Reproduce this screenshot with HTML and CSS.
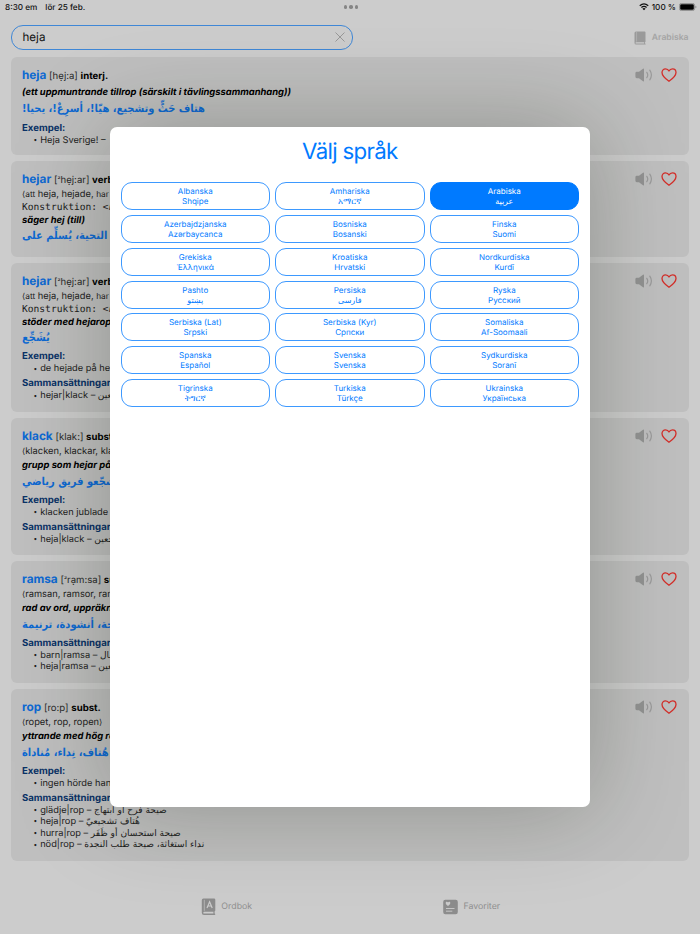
FILE: index.html
```html
<!DOCTYPE html>
<html lang="sv">

<head>
    <meta charset="UTF-8" />
    <meta name="viewport" content="width=device-width,initial-scale=1.0" />
    <title>Lexin</title>
    <link rel="stylesheet" href="styles.css">
</head>

<body>
    <!-- Shared icons -->
    <svg class="sprite" width="0" height="0">
        <symbol id="icon-speaker" viewBox="0 0 18 14">
            <path d="M1.800 3.800h2.200L8 .8q1-.6 1 .5v11.400q0 1.100-1 .5L4 10.200H1.800Q.4 10.200.4 8.800V5.200q0-1.400 1.400-1.400z" fill="#929292" />
            <path d="M11.800 4.300q1.900 2.700 0 5.400M14.800 2.200q3.200 4.800 0 9.600" fill="none" stroke="#9a9a9a" stroke-width="1.200" stroke-linecap="round" />
        </symbol>
        <symbol id="icon-heart" viewBox="0 0 16 14">
            <path d="M8 13.300C5.500 11.600 1 8.300 1 4.600 1 2.300 2.600.8 4.500.8 6.200.8 7.400 1.700 8 3 8.600 1.700 9.800.8 11.500.8 13.400.8 15 2.300 15 4.600c0 3.700-4.500 7-7 8.700z" fill="none" stroke="#d32f2a" stroke-width="1.300" stroke-linejoin="round" />
        </symbol>
    </svg>

    <div class="status-bar">
        <div class="status-left"><span>8:30 em</span><span>lör 25 feb.</span></div>
        <div class="dots"><i></i><i></i><i></i></div>
        <div class="status-right">
            <svg class="wifi" viewBox="0 0 20 15">
                <path d="M1.500 5.500q8.500-7.500 17 0M4.800 9q5.200-4.500 10.400 0" fill="none" stroke="#111" stroke-width="2.600" />
                <path d="M10 14.500 6.800 11.300q3.200-2.600 6.400 0z" fill="#111" />
            </svg>
            <span>100 %</span>
            <svg class="battery" viewBox="0 0 18 8">
                <rect x=".4" y=".4" width="15.200" height="7.200" rx="2.200" fill="none" stroke="#7d7d7d" stroke-width=".8" />
                <rect x="1.200" y="1.200" width="13.600" height="5.600" rx="1.300" fill="#000" />
                <path d="M16.500 2.800v2.400q.9-.4.9-1.200t-.9-1.200z" fill="#7d7d7d" />
            </svg>
        </div>
    </div>

    <div class="top">
        <div class="search">
            <span>heja</span>
            <svg class="clear" viewBox="0 0 10 10">
                <path d="M.5.5l9 9M9.500.5l-9 9" stroke="#929292" stroke-width=".9" />
            </svg>
        </div>
        <div class="language">
            <svg class="book" viewBox="0 0 12 14">
                <path d="M2 .5h8.500q1 0 1 1v9q0 .7-.6.9v1.200h.3q.5 0 .5.500t-.5.500H2.200Q.5 13.600.5 11.900V2Q.5.5 2 .5z" fill="#9a9a9a" />
                <path d="M2.600.5v10.200" stroke="#bcbcbc" stroke-width=".6" />
                <path d="M2.200 11.300h7.900v1.300H2.200q-.7 0-.7-.65t.7-.65z" fill="#ccc" />
            </svg>
            <span>Arabiska</span>
        </div>
    </div>

    <div class="results">
        <div class="card card-1">
            <div class="head"><b class="word">heja</b> [hẹj:a] <b>interj.</b></div>
            <div class="definition">(ett uppmuntrande tillrop (särskilt i tävlingssammanhang))</div>
            <div class="translation"><span dir="rtl" lang="ar">هتاف حَثٍّ وتشجيع، هيّا!، أسرِعْ!، يحيا!</span></div>
            <div class="section-title">Exempel:</div>
            <ul>
                <li>Heja Sverige! –</li>
            </ul>
            <div class="actions"><svg class="speaker"><use href="#icon-speaker" /></svg><svg class="heart"><use href="#icon-heart" /></svg></div>
        </div>

        <div class="card card-2">
            <div class="head"><b class="word">hejar</b> [<span class="accent">²</span>hẹj:ar] <b>verb</b></div>
            <div class="forms"><small>⟨att</small> heja, hejade, <small>har</small></div>
            <div class="construction">Konstruktion: &lt;<em>n</em></div>
            <div class="definition">säger hej (till)</div>
            <div class="translation"><span dir="rtl" lang="ar">يلقي، التحية، يُسلِّم على</span></div>
            <div class="actions"><svg class="speaker"><use href="#icon-speaker" /></svg><svg class="heart"><use href="#icon-heart" /></svg></div>
        </div>

        <div class="card card-3">
            <div class="head"><b class="word">hejar</b> [<span class="accent">²</span>hẹj:ar] <b>verb</b></div>
            <div class="forms"><small>⟨att</small> heja, hejade, <small>har</small></div>
            <div class="construction">Konstruktion: &lt;<em>n</em></div>
            <div class="definition">stöder med hejarop</div>
            <div class="translation"><span dir="rtl" lang="ar">يُشَجِّع</span></div>
            <div class="section-title">Exempel:</div>
            <ul>
                <li>de hejade på hem</li>
            </ul>
            <div class="section-title">Sammansättningar:</div>
            <ul>
                <li>hejar|klack – <span dir="rtl" class="ar">مشجعين</span></li>
            </ul>
            <div class="actions"><svg class="speaker"><use href="#icon-speaker" /></svg><svg class="heart"><use href="#icon-heart" /></svg></div>
        </div>

        <div class="card card-4">
            <div class="head"><b class="word">klack</b> [klak:] <b>subst.</b></div>
            <div class="forms"><small>⟨</small>klacken, klackar, klackarna<small>⟩</small></div>
            <div class="definition">grupp som hejar på</div>
            <div class="translation"><span dir="rtl" lang="ar">مشجّعو فريق رياضي</span></div>
            <div class="section-title">Exempel:</div>
            <ul>
                <li>klacken jublade</li>
            </ul>
            <div class="section-title">Sammansättningar:</div>
            <ul>
                <li>heja|klack – <span dir="rtl" class="ar">مشجعين</span></li>
            </ul>
            <div class="actions"><svg class="speaker"><use href="#icon-speaker" /></svg><svg class="heart"><use href="#icon-heart" /></svg></div>
        </div>

        <div class="card card-5">
            <div class="head"><b class="word">ramsa</b> [<span class="accent">²</span>rạm:sa] <b>subst.</b></div>
            <div class="forms"><small>⟨</small>ramsan, ramsor, ramsorna<small>⟩</small></div>
            <div class="definition">rad av ord, uppräkning</div>
            <div class="translation"><span dir="rtl" lang="ar">أهزوجة، أنشودة، ترنيمة</span></div>
            <div class="section-title">Sammansättningar:</div>
            <ul>
                <li>barn|ramsa – <span dir="rtl" class="ar">أطفال</span></li>
                <li>heja|ramsa – <span dir="rtl" class="ar">مشجعين</span></li>
            </ul>
            <div class="actions"><svg class="speaker"><use href="#icon-speaker" /></svg><svg class="heart"><use href="#icon-heart" /></svg></div>
        </div>

        <div class="card card-6">
            <div class="head"><b class="word">rop</b> [ro:p] <b>subst.</b></div>
            <div class="forms"><small>⟨</small>ropet, rop, ropen<small>⟩</small></div>
            <div class="definition">yttrande med hög röst</div>
            <div class="translation"><span dir="rtl" lang="ar">هُتاف، نِداء، مُناداة</span></div>
            <div class="section-title">Exempel:</div>
            <ul>
                <li>ingen hörde hans</li>
            </ul>
            <div class="section-title">Sammansättningar:</div>
            <ul>
                <li>glädje|rop – <span dir="rtl" class="ar">صيحة فرح او ابتهاج</span></li>
                <li>heja|rop – <span dir="rtl" class="ar">هُتاف تشجيعيّ</span></li>
                <li>hurra|rop – <span dir="rtl" class="ar">صيحة استحسان أو ظَفَر</span></li>
                <li>nöd|rop – <span dir="rtl" class="ar">نداء استغاثة، صيحة طلب النجدة</span></li>
            </ul>
            <div class="actions"><svg class="speaker"><use href="#icon-speaker" /></svg><svg class="heart"><use href="#icon-heart" /></svg></div>
        </div>
    </div>

    <div class="tabs">
        <div class="tab">
            <svg class="tab-icon" viewBox="0 0 15 18">
                <path d="M2.500.5H13q1.300 0 1.300 1.300v10.400q0 .8-.7 1.200v2.200q.7 0 .7.700t-.7.700H3Q.8 17 .8 14.800V2.200Q.8.5 2.500.5z" fill="#8c8c8c" />
                <path d="M3.300 1.800v11" stroke="#c4c4c4" stroke-width=".7" />
                <path d="M3.200 13.800h9.200v1.800H3.200q-.9 0-.9-.9t.9-.9z" fill="#ccc" />
                <path d="M6 10 8.600 3.800 11.200 10M6.900 8h3.400" fill="none" stroke="#ccc" stroke-width="1.200" />
            </svg>
            <span>Ordbok</span>
        </div>
        <div class="tab">
            <svg class="tab-icon" viewBox="0 0 15 18">
                <rect x=".2" y="1.700" width="14.600" height="14.600" rx="2.200" fill="#8c8c8c" />
                <path d="M5 8C3.500 7 2.700 6.200 2.700 5.100 2.700 3.500 4.500 3.400 5 4.600 5.500 3.400 7.300 3.500 7.300 5.100 7.300 6.200 6.500 7 5 8z" fill="#ccc" />
                <path d="M3 10.500h8.500M3 13.200h6.300" stroke="#ccc" stroke-width=".9" />
            </svg>
            <span>Favoriter</span>
        </div>
    </div>

    <div class="modal">
        <h1>Välj språk</h1>
        <div class="languages">
            <button class="lang-btn">Albanska<br>Shqipe</button>
            <button class="lang-btn">Amhariska<br><span class="ethiopic">አማርኛ</span></button>
            <button class="lang-btn selected">Arabiska<br>عربية</button>
            <button class="lang-btn">Azerbajdzjanska<br>Azərbaycanca</button>
            <button class="lang-btn">Bosniska<br>Bosanski</button>
            <button class="lang-btn">Finska<br>Suomi</button>
            <button class="lang-btn">Grekiska<br>Ἑλληνικά</button>
            <button class="lang-btn">Kroatiska<br>Hrvatski</button>
            <button class="lang-btn">Nordkurdiska<br>Kurdî</button>
            <button class="lang-btn">Pashto<br>پښتو</button>
            <button class="lang-btn">Persiska<br>فارسی</button>
            <button class="lang-btn">Ryska<br>Русский</button>
            <button class="lang-btn">Serbiska (Lat)<br>Srpski</button>
            <button class="lang-btn">Serbiska (Kyr)<br>Српски</button>
            <button class="lang-btn">Somaliska<br>Af-Soomaali</button>
            <button class="lang-btn">Spanska<br>Español</button>
            <button class="lang-btn">Svenska<br>Svenska</button>
            <button class="lang-btn">Sydkurdiska<br>Soranî</button>
            <button class="lang-btn">Tigrinska<br><span class="ethiopic">ትግርኛ</span></button>
            <button class="lang-btn">Turkiska<br>Türkçe</button>
            <button class="lang-btn">Ukrainska<br>Українська</button>
        </div>
    </div>
</body>

</html>
```
FILE: styles.css
```css
* {
    margin: 0;
    padding: 0;
    box-sizing: border-box;
}

body {
    position: relative;
    width: 700px;
    height: 934px;
    overflow: hidden;
    font-family: Inter, "DejaVu Sans", sans-serif;
    font-size: 9.6px;
    text-rendering: geometricPrecision;
    background: #ccc;
    color: #1c1c1c;
}

.sprite {
    display: block;
}

.status-bar {
    display: grid;
    grid-template-columns: 1fr auto 1fr;
    align-items: center;
    height: 14px;
    padding: 0 3px 0 5px;
    font-size: 8.2px;
    font-weight: 500;
    color: #111;
}

.status-left {
    display: flex;
    gap: 8px;
}

.status-right {
    display: flex;
    justify-content: flex-end;
    align-items: center;
    gap: 3px;
}

.wifi {
    width: 10px;
    height: 7.5px;
}

.battery {
    width: 18px;
    height: 8px;
}

.dots {
    display: flex;
    gap: 2px;
}

.dots i {
    width: 3.5px;
    height: 3.5px;
    border-radius: 50%;
    background: #858585;
}

.top {
    display: flex;
    justify-content: space-between;
    align-items: center;
    margin-top: 10.5px;
    padding: 0 11.5px 0 11px;
}

.search {
    display: flex;
    justify-content: space-between;
    align-items: center;
    width: 342px;
    height: 25px;
    padding: 0 7.5px 0 10.5px;
    border: 1px solid #3f87d6;
    border-radius: 12px;
    font-size: 11.6px;
    color: #111;
}

.clear {
    width: 10px;
    height: 10px;
}

.language {
    display: flex;
    align-items: center;
    gap: 5.5px;
    padding-top: 1px;
    font-size: 8.6px;
    font-weight: 600;
    color: #a5a5a5;
}

.book {
    width: 12px;
    height: 14px;
}

/* Search results */
.results {
    display: flex;
    flex-direction: column;
    gap: 6px;
    margin-top: 7px;
    padding: 0 11px;
}

.card {
    position: relative;
    padding: 9px 11px 0;
    border-radius: 6px;
    background: #bfbfbf;
    white-space: nowrap;
}

.card-1 {
    height: 98.5px;
}

.card-2 {
    height: 96px;
}

.card-3 {
    height: 149px;
}

.card-4 {
    height: 137px;
}

.card-5 {
    height: 122px;
}

.card-6 {
    height: 172px;
}

.head {
    height: 19.2px;
    line-height: 18px;
    color: #2a2a2a;
}

.head b {
    font-weight: 700;
    color: #000;
}

.head .word {
    font-size: 11.8px;
    color: #0d69d2;
}

.accent {
    font-size: 7px;
    line-height: 1;
    vertical-align: 1.5px;
}

.forms,
.construction {
    height: 12px;
    line-height: 12px;
    font-size: 9.3px;
}

.forms small {
    font-size: 8.3px;
}

.construction {
    height: 12.8px;
    line-height: 14.5px;
    font-family: "DejaVu Sans Mono", monospace;
    font-size: 9.6px;
}

.definition {
    height: 16px;
    line-height: 16.5px;
    font-size: 9.4px;
    font-weight: 700;
    font-style: italic;
    color: #000;
}

.construction + .definition {
    height: 14px;
    line-height: 13px;
}

.translation {
    height: 17px;
    line-height: 16px;
    margin-bottom: 3.5px;
    font-family: "DejaVu Sans", sans-serif;
    font-size: 11px;
    font-weight: 700;
    color: #0d69d2;
}

.card-1 .translation {
    margin-bottom: 5px;
}

.card-3 .translation {
    margin-bottom: 4.5px;
}

.translation span {
    display: inline-block;
    transform: scaleX(0.9);
    transform-origin: left;
}

.section-title {
    height: 12px;
    margin-top: 3.3px;
    line-height: 12px;
    font-size: 9.6px;
    font-weight: 700;
    color: #0a3266;
}

.card ul {
    list-style: none;
    padding-left: 11.5px;
}

.card li {
    height: 11.6px;
    line-height: 11.6px;
    font-size: 9.25px;
}

.card li::before {
    content: "•";
    margin-right: 3px;
    font-size: 6.5px;
    vertical-align: 0.8px;
}

.card li .ar {
    font-family: "DejaVu Sans", sans-serif;
    font-size: 9.1px;
}

.actions {
    position: absolute;
    top: 11px;
    right: 12px;
    display: flex;
    align-items: center;
    gap: 8px;
}

.speaker {
    width: 18px;
    height: 14px;
}

.heart {
    width: 16px;
    height: 14px;
}

.tabs {
    display: flex;
    padding: 36.5px 106px 0 104px;
}

.tab {
    display: flex;
    justify-content: center;
    align-items: center;
    gap: 5.5px;
    width: 50%;
    font-size: 8.8px;
    color: #8f8f8f;
}

.tab-icon {
    width: 15px;
    height: 18px;
}

/* Language picker */
.modal {
    position: absolute;
    top: 126.5px;
    left: 109.5px;
    width: 480.5px;
    height: 680px;
    padding: 8.5px 11px;
    border-radius: 7px;
    background: #fff;
    box-shadow: 0 0 95px rgba(20, 28, 10, 0.28);
}

.modal h1 {
    height: 33px;
    margin-bottom: 14px;
    line-height: 34px;
    font-size: 22.3px;
    font-weight: 400;
    letter-spacing: -0.7px;
    text-align: center;
    color: #007aff;
}

.languages {
    display: grid;
    grid-template-columns: repeat(3, 1fr);
    grid-auto-rows: 28px;
    gap: 4.85px 5px;
}

.lang-btn {
    border: 1px solid #3d99ff;
    border-radius: 11px;
    background: #fff;
    font-family: Inter, "DejaVu Sans", sans-serif;
    font-size: 8px;
    line-height: 10px;
    text-rendering: geometricPrecision;
    color: #007aff;
}

.lang-btn.selected {
    border-color: #007aff;
    background: #007aff;
    color: #fff;
}

.ethiopic {
    font-size: 8.5px;
    font-weight: 500;
    line-height: 1;
}
```
